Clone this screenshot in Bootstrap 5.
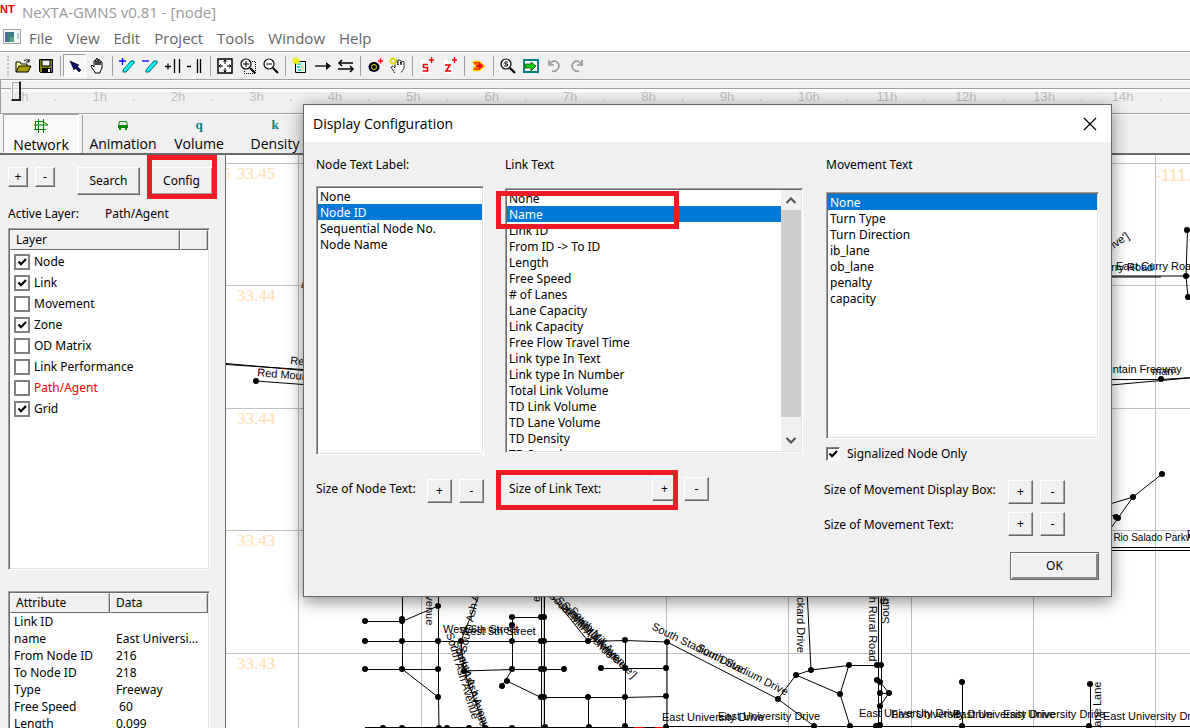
<!DOCTYPE html>
<html lang="en">
<head>
<meta charset="utf-8">
<meta name="viewport" content="width=device-width, initial-scale=1">
<title>NeXTA-GMNS v0.81 - [node]</title>
<link href="https://cdn.jsdelivr.net/npm/bootstrap@5.3.0/dist/css/bootstrap.min.css" rel="stylesheet">
<script src="https://cdn.jsdelivr.net/npm/bootstrap@5.3.0/dist/js/bootstrap.bundle.min.js" defer></script>
<style>
  :root { --face: #f0f0f0; --dark: #696969; --shade: #a0a0a0; --light: #e3e3e3; --pick: #0078d7; --ring: #ed1c24; }
  body { font: 12px/16px "Noto Sans", sans-serif; color: #000; background: var(--face); }
  .ui-font { font-family: "Open Sans", sans-serif; }
  .title-row { height: 27px; font-size: 15px; line-height: 24px; color: #999; }
  .app-mark { color: #e00; font: bold 11px/18px "Liberation Sans", sans-serif; width: 22px; }
  .menu-row { height: 24px; font-size: 15px; line-height: 22px; gap: 14px; }
  .menu-row a { color: #666; text-decoration: none; }
  .menu-row svg { margin: 2px -6px 0 -1px; }
  .etched-top { border-top: 1px solid var(--shade); box-shadow: inset 0 1px #fff; }
  .tool-row { height: 28px; padding: 0 0 0 7px; }
  .grip { width: 4px; height: 20px; border-left: 2px dotted #c0c0c0; }
  .tool { width: 23px; height: 23px; padding: 0; border: 0; background: none; display: flex; align-items: center; justify-content: center; }
  .tool svg { width: 18px; height: 18px; }
  .tool.pressed, .tab-btn.pressed { border: 1px solid; border-color: var(--shade) #fff #fff var(--shade); background: #f8f8f8; }
  .tool-sep { width: 1px; height: 20px; margin: 0 2px 0 3px; background: var(--shade); }
  .tab-row .tool-sep { height: 38px; }
  .time-row { height: 34px; border-left: 1px solid var(--shade); }
  .time-track { appearance: none; display: block; width: 100%; height: 22px; margin: 0; background: linear-gradient(#0000 8px, #a0a0a0 8px 9px, #fff 9px 12px, #0000 12px); padding-left: 10px; position: relative; }
  .time-track::-webkit-slider-thumb { appearance: none; width: 10px; height: 20px; background: #f0f0f0b0; border: 1px solid; border-width: 1px 2px 2px 1px; border-color: #fff #222 #222 #fff; box-shadow: inset 1px 1px #aaa; }
  .ticks { margin: -13px 0 0 13px; font: 13px/15px "Liberation Sans", sans-serif; color: #bdbdbd; }
  .ticks span { flex: 1 0 0; display: flex; gap: 25px; }
  .tab-row { height: 42px; padding-left: 3px; border-bottom: 2px solid var(--dark); }
  .tab-btn { width: 76px; height: 39px; padding: 3px 0 0; border: 0; background: none; font-size: 14px; line-height: 22px; }
  .tab-btn .glyph { display: block; height: 16px; font: bold 13px/15px "Liberation Serif", serif; color: #008080; }
  .side { width: 225px; flex: none; padding: 12px 15px 0 8px; }
  .raised { background: var(--face); border: 1px solid; border-color: #fff var(--dark) var(--dark) #fff; box-shadow: inset -1px -1px var(--shade); padding: 0; font: inherit; color: #000; flex: none; }
  .sq-20 { width: 20px; height: 20px; line-height: 16px; }
  .sq-25 { width: 25px; height: 24px; }
  .side-btn { width: 63px; height: 28px; font-size: 12px; }
  .gap-7 { gap: 7px; }
  .side-search { margin: 0 10px 0 22px; }
  .active-row { margin: 11px 0 6px; }
  .active-row span:first-child { width: 97px; }
  .sunken { background: #fff; border: 1px solid; border-color: var(--shade) #fff #fff var(--shade); box-shadow: inset 1px 1px var(--dark), inset -1px -1px var(--light); padding: 1px; }
  .ring { position: absolute; border: 5px solid var(--ring); pointer-events: none; }
  .ring-config { inset: -12px -4px -4px -3px; }
  .ring-name { left: -10px; top: 2px; width: 183px; height: 38px; }
  .ring-size { left: -9px; top: -7px; width: 182px; height: 40px; }
  .layer-box { height: 342px; flex: none; }
  .layer-items { padding-top: 1px; }
  .head-cell { height: 20px; padding: 1px 5px; font-weight: 400; border: 1px solid; border-color: #fff var(--dark) var(--dark) #fff; box-shadow: inset -1px 0 #c8c8c8; background: var(--face); }
  .head-layer { width: 170px; }
  .head-attr { width: 100px; }
  .layer-item { height: 21px; padding-left: 4px; gap: 4px; }
  .layer-item.active-layer { color: #f00; }
  .box-check { appearance: none; flex: none; width: 16px; height: 16px; margin: 0; border: 2px solid #808080; background: #fff; }
  .box-check:checked, .dent-check:checked { background: #fff url("data:image/svg+xml,%3Csvg xmlns='http://www.w3.org/2000/svg' viewBox='0 0 12 12'%3E%3Cpath d='M2.500 5.500L5 8.200L10 3' fill='none' stroke='%23000' stroke-width='2.200'/%3E%3C/svg%3E") center/12px no-repeat; }
  .dent-check { appearance: none; width: 14px; height: 14px; margin: 0; border: 1px solid; border-color: #808080 #fff #fff #808080; box-shadow: inset 1px 1px var(--dark); }
  .attr-box { margin-top: 21px; }
  .attr-table { width: 100%; table-layout: fixed; border-collapse: separate; border-spacing: 0; }
  .attr-table td { height: 17px; line-height: 17px; padding: 0 0 0 4px; white-space: nowrap; }
  .attr-table td + td { padding-left: 6px; }
  .map-pane { background: #fff; border-left: 1px solid var(--dark); min-width: 0; }
  .map-pane text { font: 11px "Liberation Sans", sans-serif; }
  .map-pane .coord { font: 17px "Liberation Serif", serif; fill: #ffe0b0; }
  .map-pane .coord-x { font: 17px "Liberation Sans", sans-serif; fill: #ffe0b0; }
  .map-pane .minor { font-size: 10px; }
  .config-dialog { position: absolute; left: 303px; top: 104px; width: 809px; border: 1px solid #666; background: var(--face); box-shadow: 0 4px 16px #0007; }
  .dialog-title { height: 37px; background: #fff; font-size: 14px; padding: 0 9px; }
  .close-x { width: 24px; height: 24px; padding: 0; border: 0; background: none; }
  .dialog-body { display: grid; grid-template-columns: 168px 298px 275px; column-gap: 21px; padding: 15px 12px 16px; }
  .pick-list { display: block; width: 100%; border: 0; outline: 0; padding: 0; background: #fff; font: 12px/16px "Noto Sans", sans-serif; color: #000; overflow: hidden; border-radius: 0; }
  .pick-list option { height: 16px; min-height: 16px; padding: 0 2px; line-height: 16px; color: #000; }
  .pick-list option:checked { background: var(--pick) linear-gradient(var(--pick), var(--pick)); color: #fff; -webkit-text-fill-color: #fff; }
  .list-node { height: 269px; margin-top: 13px; }
  .list-link { height: 265px; margin-top: 15px; }
  .list-move { height: 247px; margin: 19px 0 0 2px; }
  .move-head { padding-left: 2px; }
  .sunken .pick-list { height: 100%; }
  .size-row { margin-top: 24px; }
  .size-row.box-size { margin-top: 18px; }
  .size-row.text-size { margin-top: 8px; }
  .size-row span:first-child { padding-top: 2px; width: 113px; }
  .size-row.link-size span:first-child { padding-top: 4px; width: 143px; }
  .size-row.box-size span:first-child { width: 184px; }
  .size-row.text-size span:first-child { padding-top: 5px; width: 184px; }
  .size-row button + button { margin-left: 7px; }
  .sig-check { gap: 7px; margin: 7px 0 0 2px; }
  .bar { width: 20px; background: var(--face); padding: 6px 4px; }
  .bar i { flex: none; margin: 6px -4px 0; height: 207px; background: #cdcdcd; }
  .ok-row { margin-top: 16px; }
  .ok-btn { width: 89px; height: 28px; border-color: var(--dark); box-shadow: inset 1px 1px #fff, inset -2px -2px #888; }
</style>
</head>
<body class="vh-100 overflow-hidden d-flex flex-column position-relative">

<header class="bg-white ui-font flex-shrink-0">
  <div class="title-row d-flex"><span class="app-mark">NT</span><span>NeXTA-GMNS v0.81 - [node]</span></div>
  <nav class="menu-row d-flex ps-1">
    <svg width="18" height="16" viewBox="0 0 18 16" aria-hidden="true"><path d="M.5.5h17v14H.5z" fill="#f4f8fb" stroke="#9aa3aa"/><path d="M2 3h9v10H2z" fill="#3f7f86"/><path d="M2 3h3v10H2z" fill="#4a6da0"/><path d="M7 8h4v5H7z" fill="#58ab80"/><path d="M15 4v6" stroke="#78a0a0"/></svg>
    <a href="#">File</a><a href="#">View</a><a href="#">Edit</a><a href="#">Project</a><a href="#">Tools</a><a href="#">Window</a><a href="#">Help</a>
  </nav>
</header>

<div class="etched-top tool-row d-flex flex-shrink-0 align-items-center" role="toolbar" aria-label="Standard">
  <span class="grip"></span>
  <button class="tool" aria-label="Open"><svg viewBox="0 0 18 18"><path d="M2 15V5h4l1 2h6v2" fill="#ff9" stroke="#000"/><path d="M2 15l3-6h12l-3 6z" fill="#a8a000" stroke="#000"/><path d="M10 4q3-3 5 0m0-2v3h-3" fill="none" stroke="#000"/></svg></button>
  <button class="tool" aria-label="Save"><svg viewBox="0 0 18 18"><path d="M2.500 2.500h13v13h-12l-1-1z" fill="#808000" stroke="#000"/><path d="M5 3h8v6H5z" fill="#eee" stroke="#000"/><path d="M5 11h9v4H5z" fill="#000"/><path d="M11 12h2v3h-2z" fill="#fff"/></svg></button>
  <span class="tool-sep"></span>
  <button class="tool pressed" aria-label="Select"><svg viewBox="0 0 18 18"><path d="M4 4l9 4-2 1 4 4-2 2-4-4-1 2z" fill="#000060" stroke="#000" stroke-width=".6"/></svg></button>
  <button class="tool" aria-label="Pan"><svg viewBox="0 0 18 18"><path d="M6 15L3 11 2 9l1-1 2 2V4q1-1 2 0v4-6q1-1 2 0v6-5q1-1 2 0v5-3q1-1 2 0v6l-2 4v1H6z" fill="#fff" stroke="#000"/></svg></button>
  <span class="tool-sep"></span>
  <button class="tool" aria-label="Add link"><svg viewBox="0 0 18 18"><path d="M5 13l8-9h3v2l-8 9H5z" fill="#0ff" stroke="#066"/><path d="M1 4h7M4.500 1v7" stroke="#00f" stroke-width="1.300"/></svg></button>
  <button class="tool" aria-label="Delete link"><svg viewBox="0 0 18 18"><path d="M5 13l8-9h3v2l-8 9H5z" fill="#0ff" stroke="#066"/><path d="M1 4h7" stroke="#00f" stroke-width="1.300"/></svg></button>
  <button class="tool" aria-label="Add lane"><svg viewBox="0 0 18 18"><path d="M1 9.500h6M4 6.500v6M10.500 2v14M15.500 2v14" stroke="#000" stroke-width="1.300"/></svg></button>
  <button class="tool" aria-label="Remove lane"><svg viewBox="0 0 18 18"><path d="M0 9.500h4M10.500 2v14M13.500 2v14" stroke="#000" stroke-width="1.300"/></svg></button>
  <span class="tool-sep"></span>
  <button class="tool" aria-label="Fit view"><svg viewBox="0 0 18 18"><path d="M2 2h14v14H2z" fill="#fff" stroke="#000" stroke-width="1.500"/><path d="M9 3v4M9 11v4M3 9h4M11 9h4M7.500 5L9 3l1.500 2M7.500 13L9 15l1.500-2M5 7.500L3 9l2 1.500M13 7.500L15 9l-2 1.500" fill="none" stroke="#000"/></svg></button>
  <button class="tool" aria-label="Zoom in"><svg viewBox="0 0 18 18"><path d="M11 4.500h5.500v12H5.500v-4" fill="none" stroke="#000" stroke-dasharray="1 1"/><circle cx="7" cy="7" r="5" fill="#fff" stroke="#000" stroke-width="1.200"/><path d="M7 4v6M4 7h6" stroke="#000"/><path d="M11 11l5 5" stroke="#000" stroke-width="2"/></svg></button>
  <button class="tool" aria-label="Zoom out"><svg viewBox="0 0 18 18"><circle cx="7" cy="7" r="5" fill="#fff" stroke="#000" stroke-width="1.200"/><path d="M4 7h6" stroke="#000"/><path d="M11 11l5 5" stroke="#000" stroke-width="2"/></svg></button>
  <span class="tool-sep"></span>
  <button class="tool" aria-label="New zone"><svg viewBox="0 0 18 18"><path d="M4.500 4.500h10v11h-10z" fill="#e8ffff" stroke="#000"/><path d="M6 7h4M6 10h3M7 13h3" stroke="#0cc" stroke-width="1.500"/><path d="M10 8h3v6h-3z" fill="#dde8a8"/><path d="M1 4h8M5 0v7M2 1l6 6M8 1L2 7" stroke="#ee0" stroke-width="1.300"/></svg></button>
  <button class="tool" aria-label="One-way link"><svg viewBox="0 0 18 18"><path d="M1 9h13" stroke="#000" stroke-width="1.300"/><path d="M12 5l5 4-5 4z"/></svg></button>
  <button class="tool" aria-label="Two-way link"><svg viewBox="0 0 18 18"><path d="M2 6h14M1 12h14" stroke="#000" stroke-width="1.300"/><path d="M5 3L2 6l3 3M13 9l3 3-3 3" fill="none" stroke="#000" stroke-width="1.500"/></svg></button>
  <span class="tool-sep"></span>
  <button class="tool" aria-label="Add node"><svg viewBox="0 0 18 18"><ellipse cx="8" cy="10" rx="5.500" ry="5"/><circle cx="8" cy="10" r="2.500" fill="none" stroke="#ee0"/><path d="M12 4h5M14.500 1.500v5" stroke="#f00" stroke-width="1.300"/></svg></button>
  <button class="tool" aria-label="Move node"><svg viewBox="0 0 18 18"><path d="M6 16L2 10l2-1 2 2V5l2-1 1 4V3l2 0 1 5 1-4 2 1v6l-3 5" fill="#fff" stroke="#000" stroke-dasharray="2 .6"/><circle cx="4" cy="4" r="2.500" fill="none" stroke="#dd0" stroke-width="2"/></svg></button>
  <span class="tool-sep"></span>
  <button class="tool" aria-label="Add sensor"><svg viewBox="0 0 18 18"><path d="M3 3h9v13H3z" fill="#fff"/><path d="M10 7.500H5.500v3H9.500v3.500H4.500" fill="none" stroke="#e00" stroke-width="1.600"/><path d="M11 3h5M13.500 0v6" stroke="#f00" stroke-width="1.300"/></svg></button>
  <button class="tool" aria-label="Add zone"><svg viewBox="0 0 18 18"><path d="M3 3h9v13H3z" fill="#fff"/><path d="M4 8h5l-4 6h5" fill="none" stroke="#e00" stroke-width="1.600"/><path d="M11 3h5M13.500 0v6" stroke="#f00" stroke-width="1.300"/></svg></button>
  <span class="tool-sep"></span>
  <button class="tool" aria-label="Detector"><svg viewBox="0 0 18 18"><path d="M3.500 4.500h6l5 4.500-5 4.500h-6v-2.500L6 9 3.500 7z" fill="#f00" stroke="#fc0" stroke-width="1.300"/><path d="M5 7h4M5 11h4" stroke="#fc0"/></svg></button>
  <span class="tool-sep"></span>
  <button class="tool" aria-label="Find"><svg viewBox="0 0 18 18"><circle cx="7" cy="7" r="5" fill="#fff" stroke="#000" stroke-width="1.200"/><path d="M9 5H6v2h2.500v2H5" fill="none" stroke="#000"/><path d="M11 11l5 5" stroke="#000" stroke-width="2.200"/></svg></button>
  <button class="tool" aria-label="Export"><svg viewBox="0 0 18 18"><path d="M2 3h14v12H2z" fill="#fff" stroke="#008080" stroke-width="2"/><path d="M3 7h6V5l5 4-5 5v-3H3z" fill="#0c0" stroke="#040" stroke-width=".7"/></svg></button>
  <button class="tool" aria-label="Undo" disabled><svg viewBox="0 0 18 18"><path d="M4 3v5h5M4 8q4-6 8-3 4 4 0 8-2 2-5 1" fill="none" stroke="#999" stroke-width="1.600"/></svg></button>
  <button class="tool" aria-label="Redo" disabled><svg viewBox="0 0 18 18"><path d="M14 3v5H9M14 8q-4-6-8-3-4 4 0 8 2 2 5 1" fill="none" stroke="#999" stroke-width="1.600"/></svg></button>
</div>

<div class="etched-top time-row flex-shrink-0 overflow-hidden">
  <input class="time-track" type="range" min="0" max="1440" value="0" aria-label="Time of day">
  <div class="ticks d-flex"><span>0h<b class="fw-normal">.</b></span><span>1h<b class="fw-normal">.</b></span><span>2h<b class="fw-normal">.</b></span><span>3h<b class="fw-normal">.</b></span><span>4h<b class="fw-normal">.</b></span><span>5h<b class="fw-normal">.</b></span><span>6h<b class="fw-normal">.</b></span><span>7h<b class="fw-normal">.</b></span><span>8h<b class="fw-normal">.</b></span><span>9h<b class="fw-normal">.</b></span><span>10h<b class="fw-normal">.</b></span><span>11h<b class="fw-normal">.</b></span><span>12h<b class="fw-normal">.</b></span><span>13h<b class="fw-normal">.</b></span><span>14h<b class="fw-normal">.</b></span></div>
</div>

<div class="etched-top tab-row d-flex flex-shrink-0 ui-font align-items-end">
  <button class="tab-btn pressed"><span class="glyph"><svg class="d-block mx-auto" width="16" height="16" viewBox="0 0 16 16"><path d="M2 3.500h8l5 3.500H1M1 11.500h12M5.500 1v14M10.500 1v14M2.500 3v9" fill="none" stroke="#080"/></svg></span>Network</button>
  <span class="tool-sep"></span>
  <button class="tab-btn"><span class="glyph"><svg class="d-block mx-auto" width="16" height="16" viewBox="0 0 16 16"><path d="M4.500 4.500h7l1 4h-9z" fill="none" stroke="#080"/><path d="M3 8h10v3H3zM4 11h2v2H4zM10 11h2v2h-2z" fill="#080"/></svg></span>Animation</button>
  <button class="tab-btn"><span class="glyph">q</span>Volume</button>
  <button class="tab-btn"><span class="glyph">k</span>Density</button>
</div>

<main class="d-flex flex-grow-1 overflow-hidden">
  <aside class="side d-flex flex-column overflow-hidden">
    <div class="d-flex align-items-start flex-shrink-0">
      <div class="d-flex gap-7"><button class="raised sq-20">+</button><button class="raised sq-20">-</button></div>
      <button class="raised side-btn side-search">Search</button>
      <div class="position-relative flex-shrink-0"><button class="raised side-btn">Config</button><span class="ring ring-config"></span></div>
    </div>
    <div class="active-row d-flex flex-shrink-0"><span>Active Layer:</span><span>Path/Agent</span></div>
    <section class="sunken layer-box">
      <div class="d-flex"><div class="head-cell head-layer">Layer</div><div class="head-cell flex-grow-1"></div></div>
      <div class="layer-items">
      <label class="layer-item d-flex align-items-center"><input class="box-check" type="checkbox" checked>Node</label>
      <label class="layer-item d-flex align-items-center"><input class="box-check" type="checkbox" checked>Link</label>
      <label class="layer-item d-flex align-items-center"><input class="box-check" type="checkbox">Movement</label>
      <label class="layer-item d-flex align-items-center"><input class="box-check" type="checkbox" checked>Zone</label>
      <label class="layer-item d-flex align-items-center"><input class="box-check" type="checkbox">OD Matrix</label>
      <label class="layer-item d-flex align-items-center"><input class="box-check" type="checkbox">Link Performance</label>
      <label class="layer-item active-layer d-flex align-items-center"><input class="box-check" type="checkbox">Path/Agent</label>
      <label class="layer-item d-flex align-items-center"><input class="box-check" type="checkbox" checked>Grid</label>
      </div>
    </section>
    <section class="sunken attr-box flex-shrink-0">
      <table class="attr-table">
        <thead><tr><th class="head-cell head-attr">Attribute</th><th class="head-cell">Data</th></tr></thead>
        <tbody>
          <tr><td>Link ID</td><td></td></tr>
          <tr><td>name</td><td>East Universi...</td></tr>
          <tr><td>From Node ID</td><td>216</td></tr>
          <tr><td>To Node ID</td><td>218</td></tr>
          <tr><td>Type</td><td>Freeway</td></tr>
          <tr><td>Free Speed</td><td>&nbsp;60</td></tr>
          <tr><td>Length</td><td>0.099</td></tr>
        </tbody>
      </table>
    </section>
  </aside>

  <section class="map-pane flex-grow-1 overflow-hidden">
    <svg class="d-block w-100 h-100" aria-label="Network map"><g transform="translate(-226 -155)">
      <path d="M298.500 155v600M421.500 155v600M543.500 155v600M666.500 155v600M788.500 155v600M911.500 155v600M1033.500 155v600M1155.500 155v600M226 163.500h2000M226 285.500h2000M226 408.500h2000M226 530.500h2000M226 653.500h2000" stroke="#c0c0c0" fill="none"/>
      <g><text class="coord" x="222" y="179">5</text><text class="coord" x="237" y="179">33.45</text><text class="coord" x="237" y="301">33.44</text><text class="coord" x="237" y="424">33.44</text><text class="coord" x="237" y="546">33.43</text><text class="coord" x="237" y="669">33.43</text><text class="coord-x" x="1155" y="181">-111.93</text></g>
      <g stroke="#000" fill="none">
        <path d="M226 363.500L310 371M226 364.500L310 370M256 381L310 385"/>
        <path d="M302 288l2-7" stroke="#a50" stroke-width="2"/>
        <path d="M402.500 590V669M438.500 590V697L439 728M365 621.500H402L438 606M365 641.500H588L625 640.500L667 642V728M365 669.500H438M402 669L438 697M481 590L461 641L464 671L512 669.500H564M601 668.500H666M464 671L485 728M512 617.500H544M512.500 617V669L502 686M507 681L541 697.500H625L666 696.500M541.500 590V728M544.500 590V728M547 590L588 641M588.500 697V728M625.500 640V728M365 727.500H665"/>
        <path d="M667 642L778 699L814 726M778 699L796 675L811 670L849 665.500H881M811 670L807 590M796 675L840 694L849 665M840 694L850 726M878.500 590V728M881.500 590V728M880 682L889 693L880 706M880 693.500H889M962.500 682V726M1090.500 684V726M667 726.500H1200"/>
        <path d="M1187.500 230L1186 276L1188 297M1100 276H1200M1100 277H1161M1100 379.500H1161L1200 377M1100 386L1200 377M1162 474L1133 497L1111 528M1100 507L1133 497M1105 512L1118 518M1100 547.500H1200M1100 550.500H1200"/>
      </g>
      <path d="M634 727.500h10M655 727.500h10" stroke="#f00"/>
      <path stroke="#000" stroke-width="6" stroke-linecap="round" d="M256 381h0M365 621h0M402 619h0M402 621h0M438 606h0M365 641h0M402 641h0M438 641h0M461 641h0M512 641h0M541 641h0M544 641h0M588 641h0M625 640h0M667 642h0M365 669h0M402 669h0M438 669h0M464 671h0M512 669h0M541 669h0M544 669h0M564 669h0M601 668h0M625 668h0M666 668h0M507 681h0M502 686h0M438 697h0M541 697h0M544 697h0M588 697h0M625 697h0M666 696h0M512 617h0M541 617h0M544 617h0M512 625h0M383 728h0M402 728h0M439 728h0M447 728h0M469 728h0M485 728h0M512 728h0M545 727h0M589 727h0M625 726h0M666 727h0M796 675h0M811 670h0M849 665h0M877 665h0M881 665h0M840 694h0M778 699h0M877 680h0M880 682h0M880 693h0M889 693h0M880 706h0M814 726h0M850 726h0M876 726h0M880 725h0M962 682h0M962 726h0M1090 684h0M1089 726h0M1187 230h0M1186 276h0M1188 297h0M1161 379h0M1162 474h0M1133 497h0M1116 517h0M1118 518h0"/>
      <text x="290" y="364" transform="rotate(6 290 364)">Red Mountain</text><text x="257" y="376" transform="rotate(5 257 376)">Red Mountain</text>
      <text x="443" y="633">West 6th Street</text><text x="460" y="635">West 5th Street</text>
      <text x="446" y="634" transform="rotate(73 446 634)">South Ash Avenue</text><text x="456" y="650" transform="rotate(71 456 650)">South Ash Avenue</text><text x="453" y="642" transform="rotate(72 453 642)">South Ash Avenue</text>
      <text x="466" y="653" transform="rotate(-77 466 653)">South Ash Avenue</text>
      <text x="426" y="524" transform="rotate(90 426 524)">South Maple Avenue</text>
      <text x="540" y="602" transform="rotate(-90 540 602)">e Avenue</text>
      <text x="548" y="596" transform="rotate(46 548 596)">South Mill Avenue</text><text x="555" y="601" transform="rotate(46 555 601)">South Mill Avenue</text><text x="561" y="606" transform="rotate(46 561 606)">South Mill Avenue</text><text x="569" y="611" transform="rotate(47 569 611)">South Mill Avenue']</text>
      <text x="651" y="629" transform="rotate(26 651 629)">South Stadium Drive</text><text x="696" y="650" transform="rotate(27 696 650)">South Stadium Drive</text>
      <text x="662" y="721">East University Drive</text><text x="718" y="720">East University Drive</text>
      <text x="797" y="552" transform="rotate(90 797 552)">South Packard Drive</text>
      <text x="869" y="574" transform="rotate(90 869 574)">South Rural Road</text><text x="889" y="624" transform="rotate(-90 889 624)">South Rural Road</text><text x="888" y="605" transform="rotate(-90 888 605)">South Rural Road</text>
      <text x="859" y="717">East University Drive</text><text x="891" y="718">East University Drive</text><text x="953" y="718">East University Drive</text><text x="1003" y="718">East University Drive</text><text x="1103" y="720">East University Drive</text>
      <text x="1101" y="706" transform="rotate(-90 1101 706)">Lane</text><text x="1101" y="758" transform="rotate(-90 1101 758)">East Lane</text>
      <text x="1097" y="271">Curry Road</text><text x="1116" y="270">East Curry Road</text>
      <text x="1078" y="273" transform="rotate(-34 1078 273)">South Drive']</text>
      <text x="1076" y="373">ed Mountain Freeway</text><text x="1152" y="375">man</text>
      <text class="minor" x="1088" y="541">West Rio Salado Parkway</text><text class="minor" x="1187" y="538">East</text>
    </g></svg>
  </section>
</main>

<div class="config-dialog" role="dialog" aria-label="Display Configuration">
  <div class="dialog-title ui-font d-flex align-items-center justify-content-between"><span>Display Configuration</span>
    <button class="close-x" aria-label="Close"><svg class="d-block mx-auto" width="14" height="14" viewBox="0 0 14 14"><path d="M1 1l12 12M13 1L1 13" stroke="#000" stroke-width="1.200"/></svg></button></div>
  <div class="dialog-body">
    <section>
      <label class="d-block" for="nodeText">Node Text Label:</label>
      <div class="sunken list-node"><select id="nodeText" class="pick-list" size="8"><option>None</option><option selected>Node ID</option><option>Sequential Node No.</option><option>Node Name</option></select></div>
      <div class="size-row d-flex"><span>Size of Node Text:</span><button class="raised sq-25">+</button><button class="raised sq-25">-</button></div>
    </section>
    <section>
      <label class="d-block" for="linkText">Link Text</label>
      <div class="sunken list-link d-flex position-relative"><select id="linkText" class="pick-list flex-grow-1" size="8"><option>None</option><option selected>Name</option><option>Link ID</option><option>From ID -&gt; To ID</option><option>Length</option><option>Free Speed</option><option># of Lanes</option><option>Lane Capacity</option><option>Link Capacity</option><option>Free Flow Travel Time</option><option>Link type In Text</option><option>Link type In Number</option><option>Total Link Volume</option><option>TD Link Volume</option><option>TD Lane Volume</option><option>TD Density</option><option>TD Speed</option></select>
        <div class="bar d-flex flex-column flex-shrink-0 align-items-stretch" aria-hidden="true"><svg class="flex-shrink-0" width="12" height="8" viewBox="0 0 12 8"><path d="M1.500 7L6 2.500 10.500 7" fill="none" stroke="#505050" stroke-width="2"/></svg><i></i><svg class="mt-auto flex-shrink-0" width="12" height="8" viewBox="0 0 12 8"><path d="M1.500 1L6 5.500 10.500 1" fill="none" stroke="#505050" stroke-width="2"/></svg></div>
        <span class="ring ring-name"></span></div>
      <div class="size-row link-size d-flex position-relative ps-1"><span>Size of Link Text:</span><button class="raised sq-25">+</button><button class="raised sq-25">-</button><span class="ring ring-size"></span></div>
    </section>
    <section>
      <label class="d-block move-head" for="moveText">Movement Text</label>
      <div class="sunken list-move"><select id="moveText" class="pick-list" size="8"><option selected>None</option><option>Turn Type</option><option>Turn Direction</option><option>ib_lane</option><option>ob_lane</option><option>penalty</option><option>capacity</option></select></div>
      <label class="sig-check d-flex align-items-center"><input class="dent-check" type="checkbox" checked>Signalized Node Only</label>
      <div class="size-row box-size d-flex"><span>Size of Movement Display Box:</span><button class="raised sq-25">+</button><button class="raised sq-25">-</button></div>
      <div class="size-row text-size d-flex"><span>Size of Movement Text:</span><button class="raised sq-25">+</button><button class="raised sq-25">-</button></div>
      <div class="ok-row d-flex justify-content-end"><button class="raised ok-btn">OK</button></div>
    </section>
  </div>
</div>
</body>
</html>
